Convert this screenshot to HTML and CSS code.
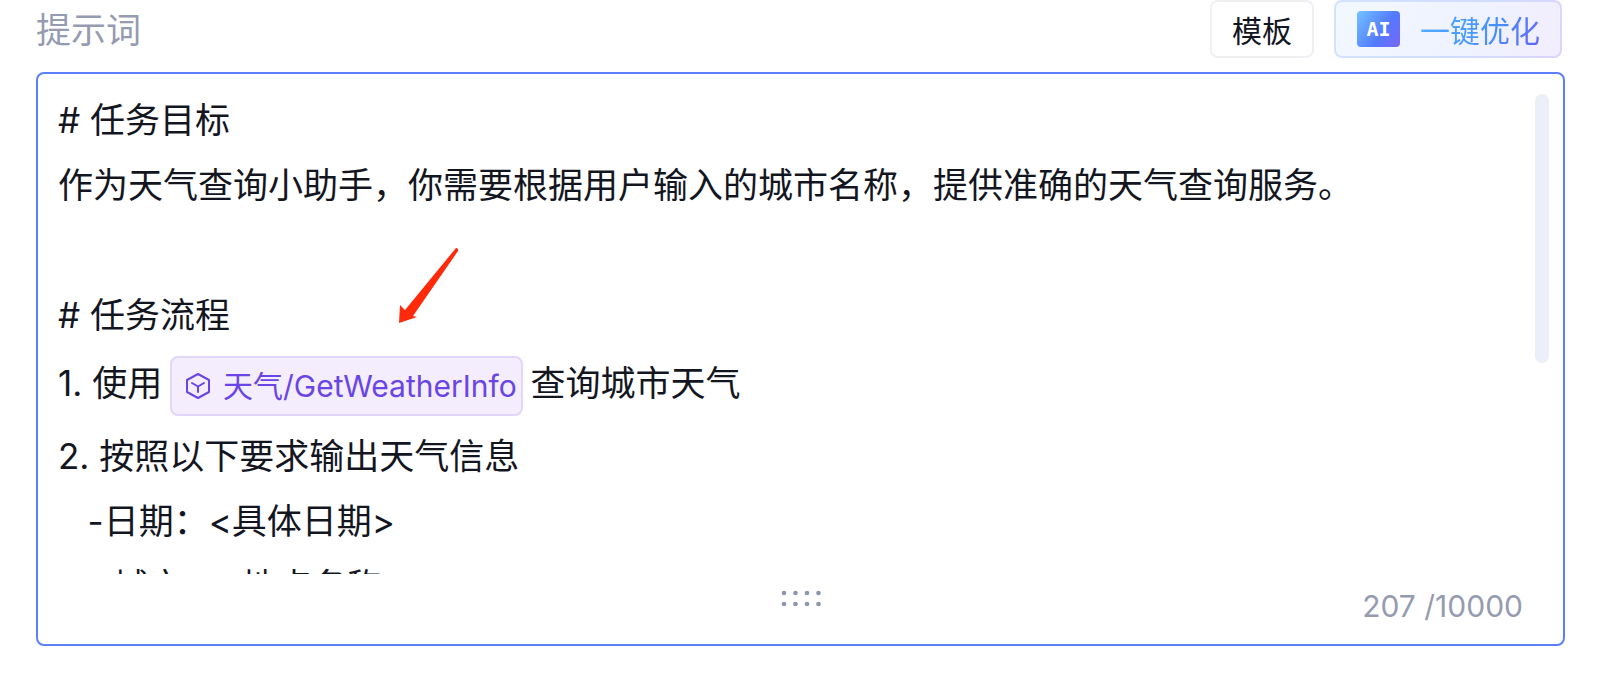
FILE: index.html
```html
<!DOCTYPE html>
<html lang="zh-CN">
<head>
<meta charset="utf-8">
<meta name="viewport" content="width=device-width, initial-scale=1">
<title>提示词</title>
<link rel="stylesheet" href="styles.css">
</head>
<body>
<main class="prompt">
  <header class="prompt-header">
    <h1 class="prompt-label" id="prompt-label">提示词</h1>
    <div class="actions">
      <button type="button" class="btn">模板</button>
      <button type="button" class="btn btn-ai"><span class="ai-badge">AI</span><span class="ai-text">一键优化</span></button>
    </div>
  </header>
  <section class="editor">
    <div class="editor-body">
      <div class="editor-text" role="textbox" aria-multiline="true" aria-labelledby="prompt-label" contenteditable="true" spellcheck="false"><p class="line"># 任务目标</p><p class="line">作为天气查询小助手，你需要根据用户输入的城市名称，提供准确的天气查询服务。</p><p class="line"><br></p><p class="line"># 任务流程</p><p class="line">1. 使用 <span class="chip" contenteditable="false"><svg class="chip-icon" viewBox="0 0 26 28" fill="none" stroke="currentColor" stroke-width="2" stroke-linejoin="round" stroke-linecap="round" aria-hidden="true"><path d="M13 2 L24 8 V20 L13 26 L2 20 V8 Z"/><path d="M7 11 L13 14.500 L19 11 M13 14.500 V20"/></svg>天气/GetWeatherInfo</span> 查询城市天气</p><p class="line">2. 按照以下要求输出天气信息</p><p class="line">   -日期：&lt;具体日期&gt;</p><p class="line">   - 城市：&lt;地点名称&gt;</p></div>
      <div class="scroll-thumb"></div>
      <svg class="arrow" viewBox="0 0 60 78" aria-hidden="true"><path fill="#ff2a0a" d="M57 1 Q60 1 59 4 L14 69 L18 70 L0 76 L1 58 L6 63 Z"/></svg>
    </div>
    <footer class="editor-footer">
      <svg class="grip" viewBox="0 0 40 16" fill="#8d95ac" aria-hidden="true"><circle cx="3" cy="3" r="2.300"/><circle cx="14.500" cy="3" r="2.300"/><circle cx="26" cy="3" r="2.300"/><circle cx="37.500" cy="3" r="2.300"/><circle cx="3" cy="14" r="2.300"/><circle cx="14.500" cy="14" r="2.300"/><circle cx="26" cy="14" r="2.300"/><circle cx="37.500" cy="14" r="2.300"/></svg>
      <span class="counter">207 /10000</span>
    </footer>
  </section>
</main>
</body>
</html>
```
FILE: styles.css
```css
* { box-sizing: border-box; }

body {
  margin: 0;
  background: #fff;
  color: #14161f;
  font-family: Inter, "Noto Sans CJK SC", sans-serif;
}

.prompt { padding: 0 35px 26px 36px; }

.prompt-header {
  display: flex;
  align-items: center;
  justify-content: space-between;
  padding-right: 3px;
  margin-bottom: 14px;
}

.prompt-label {
  margin: 0;
  font-size: 35px;
  font-weight: 400;
  line-height: 60px;
  height: 58px;
  color: #959bb0;
}

.actions { display: flex; gap: 20px; }

.btn {
  display: flex;
  align-items: center;
  height: 58px;
  padding: 0 20px;
  border: 2px solid #f0f0f4;
  border-radius: 8px;
  background: #fff;
  color: #14161f;
  font-family: inherit;
  font-size: 30px;
}

.btn-ai {
  gap: 20px;
  padding: 0 20px 0 21px;
  border: 2px solid transparent;
  background:
    linear-gradient(120deg, #f2f8ff, #eff2ff 60%, #f2edfe) padding-box,
    linear-gradient(120deg, #d3e3ff, #d0dcff 60%, #ddd3fc) border-box;
}

.ai-badge {
  display: grid;
  place-items: center;
  width: 43px;
  height: 36px;
  border-radius: 4px;
  background: linear-gradient(125deg, #6fbcff 5%, #5379ff 60%, #7a66f5 100%);
  color: #fff;
  font-family: "DejaVu Sans Mono", monospace;
  font-size: 20px;
  font-weight: 700;
}

.ai-text {
  background: linear-gradient(120deg, #50acff 10%, #4690fd 60%, #6468fa 95%);
  background-clip: text;
  -webkit-background-clip: text;
  color: transparent;
}

.editor {
  border: 2px solid #5c80fa;
  border-radius: 8px;
}

.editor-body {
  position: relative;
  display: flex;
  justify-content: space-between;
  height: 500px;
  padding: 14px 14px 0 20px;
  overflow: hidden;
}

.editor-text {
  flex: 1;
  font-size: 35px;
  line-height: 65px;
  white-space: pre-wrap;
  outline: none;
}

.line { margin: 0; }

.chip {
  display: inline-flex;
  align-items: center;
  height: 60px;
  margin: 8px -2px;
  padding: 0 4px 0 13px;
  border: 2px solid #e2d6fb;
  border-radius: 8px;
  background: #f4edfd;
  color: #6a45e6;
  font-size: 30px;
  vertical-align: middle;
}

.chip-icon {
  width: 26px;
  height: 28px;
  margin-right: 12px;
}

.scroll-thumb {
  width: 14px;
  height: 269px;
  margin-top: 6px;
  border-radius: 7px;
  background: #eceef8;
}

/* annotation arrow lying over the text */
.arrow {
  position: absolute;
  top: 173px;
  left: 361px;
  width: 60px;
  height: 78px;
}

.editor-footer {
  display: grid;
  grid-template-columns: 1fr auto 1fr;
  align-items: start;
  height: 70px;
  padding: 16px 40px 0;
}

.grip {
  grid-column: 2;
  width: 40px;
  height: 16px;
}

.counter {
  justify-self: end;
  font-size: 30px;
  line-height: 32px;
  color: #959bb0;
}
```
